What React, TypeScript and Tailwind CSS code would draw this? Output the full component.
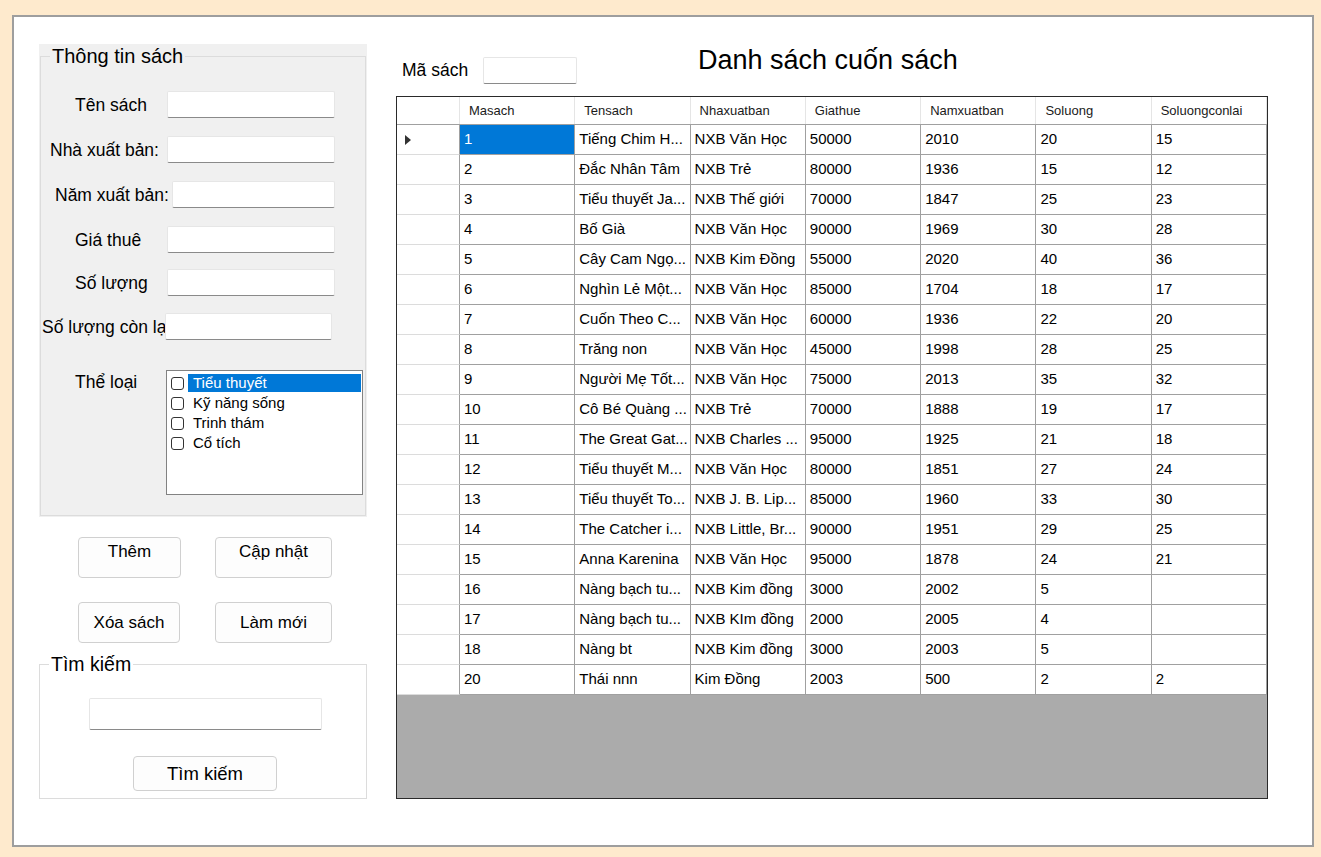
import React from "react";

const rows: string[][] = [
  ["1", "Tiếng Chim H...", "NXB Văn Học", "50000", "2010", "20", "15"],
  ["2", "Đắc Nhân Tâm", "NXB Trẻ", "80000", "1936", "15", "12"],
  ["3", "Tiểu thuyết Ja...", "NXB Thế giới", "70000", "1847", "25", "23"],
  ["4", "Bố Già", "NXB Văn Học", "90000", "1969", "30", "28"],
  ["5", "Cây Cam Ngọ...", "NXB Kim Đồng", "55000", "2020", "40", "36"],
  ["6", "Nghìn Lẻ Một...", "NXB Văn Học", "85000", "1704", "18", "17"],
  ["7", "Cuốn Theo C...", "NXB Văn Học", "60000", "1936", "22", "20"],
  ["8", "Trăng non", "NXB Văn Học", "45000", "1998", "28", "25"],
  ["9", "Người Mẹ Tốt...", "NXB Văn Học", "75000", "2013", "35", "32"],
  ["10", "Cô Bé Quàng ...", "NXB Trẻ", "70000", "1888", "19", "17"],
  ["11", "The Great Gat...", "NXB Charles ...", "95000", "1925", "21", "18"],
  ["12", "Tiểu thuyết M...", "NXB Văn Học", "80000", "1851", "27", "24"],
  ["13", "Tiểu thuyết To...", "NXB J. B. Lip...", "85000", "1960", "33", "30"],
  ["14", "The Catcher i...", "NXB Little, Br...", "90000", "1951", "29", "25"],
  ["15", "Anna Karenina", "NXB Văn Học", "95000", "1878", "24", "21"],
  ["16", "Nàng bạch tu...", "NXB Kim đồng", "3000", "2002", "5", ""],
  ["17", "Nàng bạch tu...", "NXB KIm đồng", "2000", "2005", "4", ""],
  ["18", "Nàng bt", "NXB Kim đồng", "3000", "2003", "5", ""],
  ["20", "Thái nnn", "Kim Đồng", "2003", "500", "2", "2"],
];

const headers = ["Masach", "Tensach", "Nhaxuatban", "Giathue", "Namxuatban", "Soluong", "Soluongconlai"];

const inputCls =
  "block bg-white border border-[#e6e6e6] border-b-[#8a8a8a] rounded-[2px] outline-none";

function Field({
  label,
  mt,
  labelW,
  pl,
  inputW,
}: {
  label: string;
  mt: string;
  labelW: string;
  pl: string;
  inputW: string;
}) {
  return (
    <div className={`flex items-center h-[27px] ${mt}`}>
      <div className={`${labelW} ${pl} shrink-0 whitespace-nowrap text-[17.5px] leading-[20px]`}>
        {label}
      </div>
      <input readOnly className={`${inputCls} ${inputW} h-[27px]`} />
    </div>
  );
}

function Btn({ label, cls, top }: { label: string; cls: string; top?: boolean }) {
  return (
    <div
      className={`bg-[#fdfdfd] border border-[#d0d0d0] rounded-[4px] flex justify-center leading-[20px] ${
        top ? "items-start pt-[4px]" : "items-center"
      } ${cls}`}
    >
      {label}
    </div>
  );
}

const cats = ["Tiểu thuyết", "Kỹ năng sống", "Trinh thám", "Cổ tích"];

export default function App() {
  return (
    <div className="w-[1321px] h-[857px] bg-[#feeacd] pl-[12px] pt-[15px] font-['Liberation_Sans',Arial,sans-serif] text-black">
      <div className="w-[1302px] h-[832px] bg-white border-2 border-[#9e9e9e] flex pl-[25px] pt-[27px]">
        {/* Left column */}
        <div className="w-[328px] shrink-0 flex flex-col">
          <div className="h-[473px] bg-[#f0f0f0] p-[1px]">
            <fieldset className="h-full border border-[#dcdcdc]">
              <legend className="ml-[9px] px-[2px] text-[20px] leading-[22px]">Thông tin sách</legend>
              <Field label="Tên sách" mt="mt-[24px]" labelW="w-[126px]" pl="pl-[34px]" inputW="w-[168px]" />
              <Field label="Nhà xuất bản:" mt="mt-[18px]" labelW="w-[126px]" pl="pl-[9px]" inputW="w-[168px]" />
              <Field label="Năm xuất bản:" mt="mt-[18px]" labelW="w-[131px]" pl="pl-[14px]" inputW="w-[163px]" />
              <Field label="Giá thuê" mt="mt-[18px]" labelW="w-[126px]" pl="pl-[34px]" inputW="w-[168px]" />
              <Field label="Số lượng" mt="mt-[16px]" labelW="w-[126px]" pl="pl-[34px]" inputW="w-[168px]" />
              <Field label="Số lượng còn lạ" mt="mt-[17px]" labelW="w-[124px]" pl="pl-[1px]" inputW="w-[167px]" />
              <div className="flex mt-[30px]">
                <div className="w-[125px] pl-[34px] mt-[2px] text-[17.5px] leading-[20px] shrink-0">Thể loại</div>
                <div className="w-[197px] h-[125px] bg-white border border-[#828282] pt-[2px] pl-[4px]">
                  {cats.map((c, i) => (
                    <div key={c} className="flex items-center h-[20px]">
                      <div className="w-[13px] h-[13px] border border-[#333] rounded-[3px] bg-white shrink-0" />
                      <div
                        className={`ml-[4px] h-[18px] flex items-center pl-[5px] text-[15px] leading-[18px] ${
                          i === 0 ? "bg-[#0078d7] text-white w-[173px]" : ""
                        }`}
                      >
                        {c}
                      </div>
                    </div>
                  ))}
                </div>
              </div>
            </fieldset>
          </div>

          <div className="flex mt-[20px]">
            <Btn label="Thêm" cls="ml-[39px] w-[103px] h-[41px] text-[17px]" top />
            <Btn label="Cập nhật" cls="ml-[34px] w-[117px] h-[41px] text-[17px]" top />
          </div>
          <div className="flex mt-[24px]">
            <Btn label="Xóa sách" cls="ml-[39px] w-[102px] h-[41px] text-[17px]" />
            <Btn label="Làm mới" cls="ml-[35px] w-[117px] h-[41px] text-[17px]" />
          </div>

          <fieldset className="mt-[10px] h-[146px] border border-[#dcdcdc]">
            <legend className="ml-[9px] px-[2px] text-[19.5px] leading-[22px]">Tìm kiếm</legend>
            <input readOnly className={`${inputCls} ml-[49px] mt-[23px] w-[233px] h-[32px]`} />
            <Btn label="Tìm kiếm" cls="ml-[93px] mt-[26px] w-[144px] h-[35px] text-[18.5px]" />
          </fieldset>
        </div>

        {/* Right column */}
        <div className="ml-[29px] w-[872px] flex flex-col">
          <div className="h-[52px] flex items-start">
            <div className="ml-[6px] mt-[13px] w-[81px] h-[27px] flex items-center text-[17.5px]">Mã sách</div>
            <input readOnly className={`${inputCls} mt-[13px] w-[94px] h-[27px]`} />
            <div className="ml-[121px] mt-[1px] text-[27px] leading-[30px]">Danh sách cuốn sách</div>
          </div>

          <div className="h-[703px] border border-[#2a2a2a] bg-[#ababab] flex flex-col">
            <div className="grid grid-cols-[63px_repeat(7,minmax(0,1fr))] h-[28px] bg-white border-b border-[#a0a0a0]">
              <div className="border-r border-[#e5e5e5]" />
              {headers.map((h) => (
                <div key={h} className="border-r border-[#e5e5e5] pl-[9px] flex items-center text-[13px] text-[#1a1a1a] whitespace-nowrap overflow-hidden">
                  {h}
                </div>
              ))}
            </div>
            {rows.map((r, ri) => (
              <div key={ri} className="grid grid-cols-[63px_repeat(7,minmax(0,1fr))] h-[30px] bg-white">
                <div className="border-r border-b border-r-[#a0a0a0] border-b-[#dcdcdc] flex items-center pl-[8px]">
                  {ri === 0 && (
                    <svg width="6" height="10" viewBox="0 0 6 10">
                      <path d="M0 0 L6 5 L0 10 Z" fill="#333" />
                    </svg>
                  )}
                </div>
                {r.map((c, ci) => (
                  <div
                    key={ci}
                    className={`border-r border-b border-[#a0a0a0] pl-[4px] flex items-center text-[15px] whitespace-nowrap overflow-hidden ${
                      ri === 0 && ci === 0 ? "bg-[#0078d7] text-white" : ""
                    }`}
                  >
                    {c}
                  </div>
                ))}
              </div>
            ))}
            <div className="flex-1" />
          </div>
        </div>
      </div>
    </div>
  );
}
